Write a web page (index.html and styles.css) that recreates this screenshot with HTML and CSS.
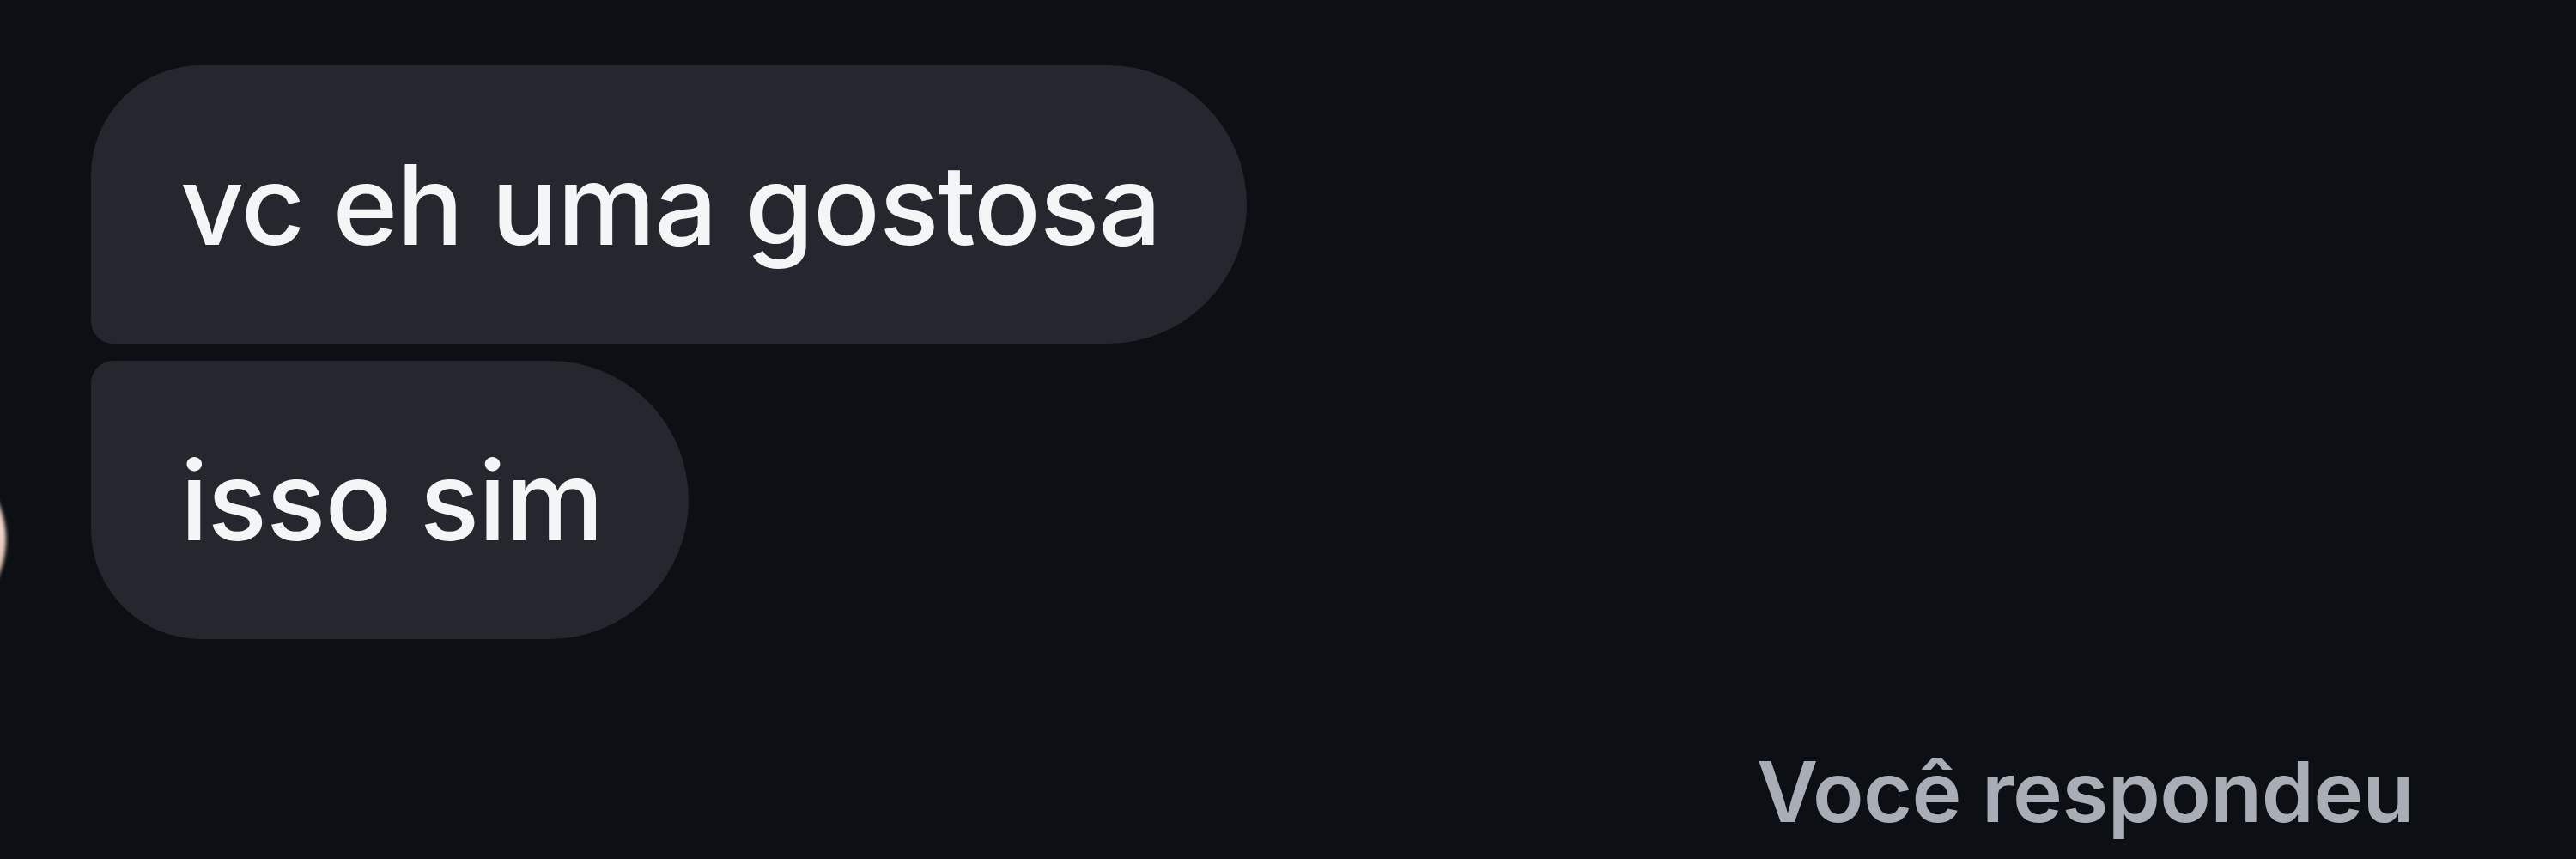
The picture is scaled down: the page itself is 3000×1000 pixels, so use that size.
FILE: index.html
```html
<!DOCTYPE html>
<html lang="pt">
<head>
<meta charset="utf-8">
<link rel="stylesheet" href="styles.css">
</head>
<body>
<div class="thread">
  <div class="group">
    <div class="avatar"></div>
    <div class="bubbles">
      <div class="bubble first">vc eh uma gostosa</div>
      <div class="bubble last">isso sim</div>
    </div>
  </div>
  <div class="status">Você respondeu</div>
</div>
</body>
</html>
```

FILE: styles.css
```css
html, body {
  margin: 0;
  padding: 0;
  background: #0c0f14;
  height: 1000px;
  overflow: hidden;
}
.thread {
  width: 3000px;
  height: 1000px;
  padding-top: 76px;
  box-sizing: border-box;
  display: flex;
  flex-direction: column;
  font-family: Inter, "Liberation Sans", sans-serif;
}
.group {
  display: flex;
  align-items: flex-end;
}
.avatar {
  flex-shrink: 0;
  width: 214px;
  height: 214px;
  border-radius: 50%;
  margin-left: -207px;
  margin-right: 99px;
  margin-bottom: 9px;
  background: radial-gradient(circle at 95% 45%, #f2d6cc 0%, #c9a394 35%, #6b5550 70%, #2a2426 100%);
  filter: blur(2px);
}
.bubbles {
  display: flex;
  flex-direction: column;
  align-items: flex-start;
  gap: 20px;
}
.bubble {
  height: 324px;
  box-sizing: border-box;
  padding: 0 100px 0 104px;
  display: flex;
  align-items: center;
  background: #25272e;
  color: #f4f5f6;
  font-size: 129px;
  font-weight: 500;
  letter-spacing: -1px;
  white-space: nowrap;
}
.bubble.first {
  border-radius: 128px 162px 162px 26px;
}
.bubble.last {
  border-radius: 26px 162px 162px 128px;
}
.status {
  align-self: flex-end;
  margin-right: 189px;
  margin-top: 118px;
  color: #a9aeb6;
  font-size: 98px;
  font-weight: 600;
  letter-spacing: -0.6px;
}
```
